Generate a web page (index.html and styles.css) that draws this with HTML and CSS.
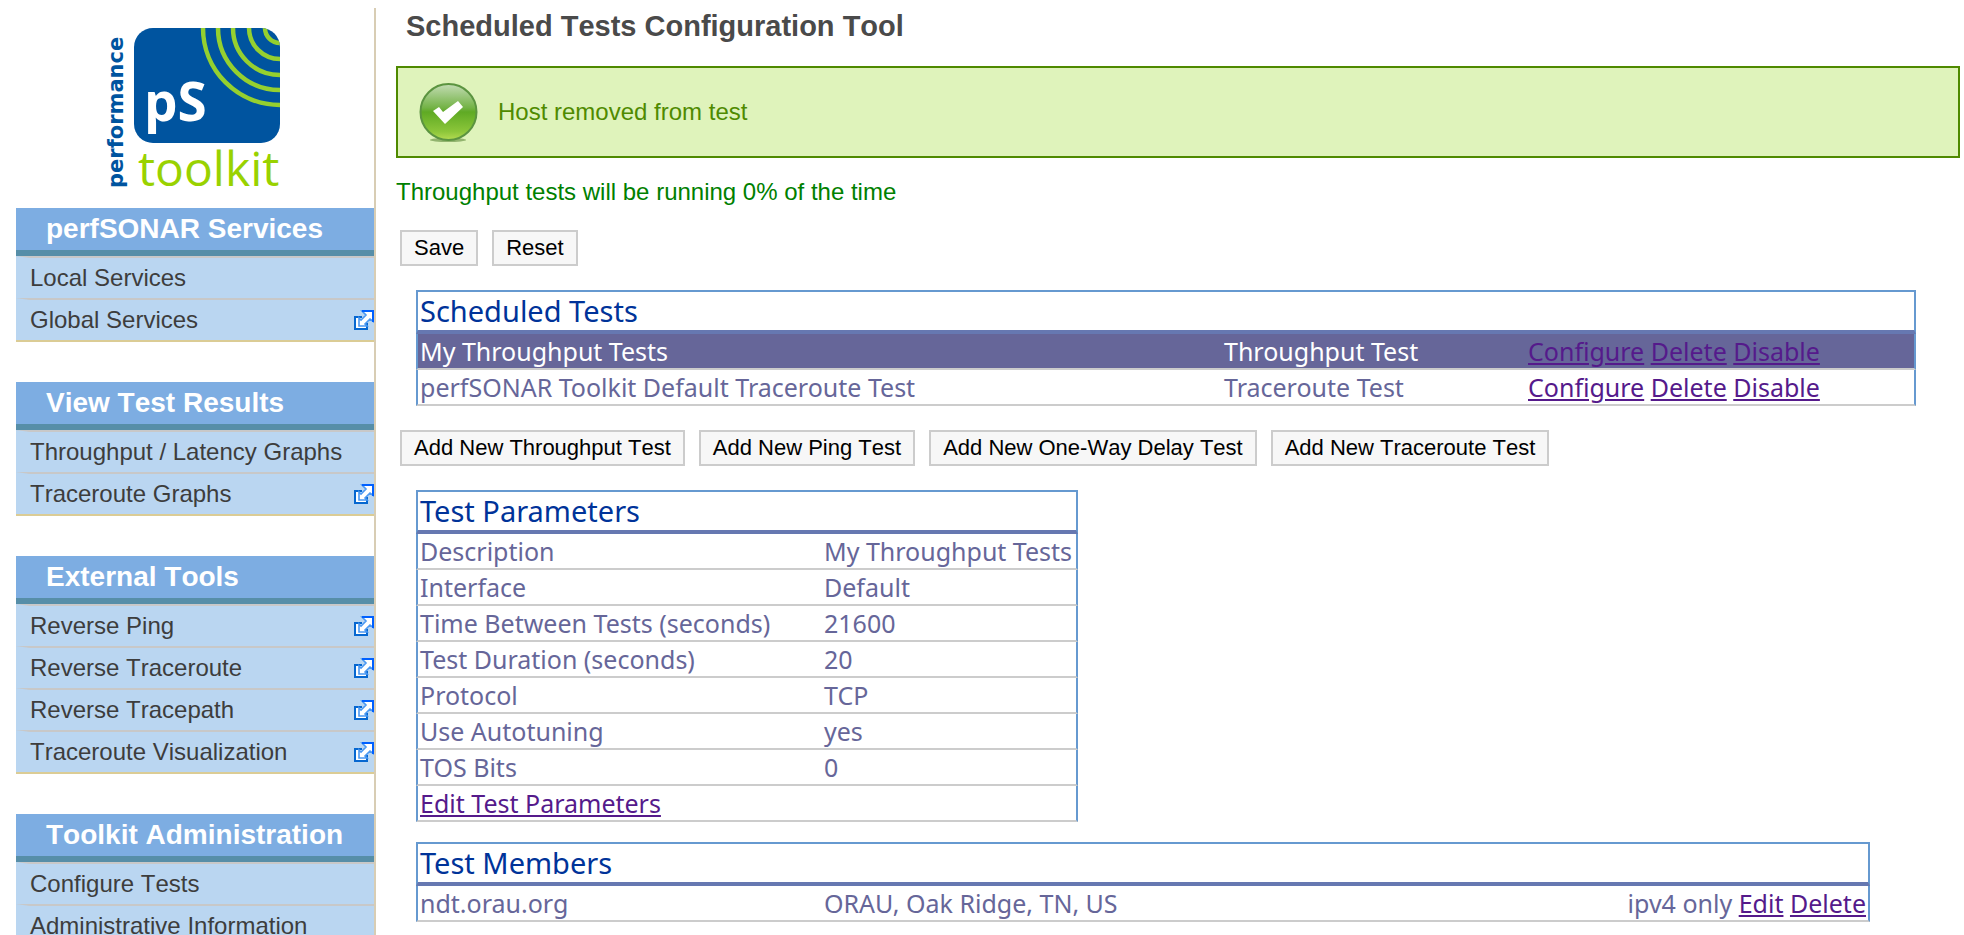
FILE: index.html
```html
<!DOCTYPE html>
<html lang="en">
<head>
<meta charset="utf-8">
<title>Scheduled Tests Configuration Tool</title>
<link rel="stylesheet" href="styles.css">
</head>
<body>
<svg class="defs" aria-hidden="true">
  <symbol id="external" viewBox="0 0 20 20">
    <path d="M8 7H1v12h12v-6" fill="#fff" stroke="#0667d0" stroke-width="2"/>
    <path d="M8 1H20V12L16 9L11 14L13 16H5V8L7 10L12 5Z" fill="#fff" stroke="#4a98f2" stroke-width="1.6"/>
    <path d="M8 1h11v11" fill="none" stroke="#0060ff" stroke-width="2"/>
  </symbol>
</svg>
<div class="page">
  <aside class="sidebar">
    <svg class="logo" viewBox="0 0 174 160" role="img" aria-label="pS performance toolkit">
      <defs><clipPath id="badge"><rect x="28" y="0" width="146" height="115" rx="19"/></clipPath></defs>
      <rect x="28" y="0" width="146" height="115" rx="19" fill="#00549f"/>
      <g clip-path="url(#badge)" fill="none" stroke="#95d02f" stroke-width="4.5">
        <circle cx="174" cy="0" r="15"/><circle cx="174" cy="0" r="31"/><circle cx="174" cy="0" r="47"/><circle cx="174" cy="0" r="62"/><circle cx="174" cy="0" r="77"/>
      </g>
      <text class="logo-ps" x="38" y="93">pS</text>
      <text class="logo-perf" transform="translate(17 160) rotate(-90)">performance</text>
      <text class="logo-kit" x="32" y="158">toolkit</text>
    </svg>
    <nav class="menu">
      <section class="group">
        <h2>perfSONAR Services</h2>
        <ul>
          <li><a href="#">Local Services</a></li>
          <li><a href="#">Global Services</a><svg class="ext"><use href="#external"/></svg></li>
        </ul>
      </section>
      <section class="group">
        <h2>View Test Results</h2>
        <ul>
          <li><a href="#">Throughput / Latency Graphs</a></li>
          <li><a href="#">Traceroute Graphs</a><svg class="ext"><use href="#external"/></svg></li>
        </ul>
      </section>
      <section class="group">
        <h2>External Tools</h2>
        <ul>
          <li><a href="#">Reverse Ping</a><svg class="ext"><use href="#external"/></svg></li>
          <li><a href="#">Reverse Traceroute</a><svg class="ext"><use href="#external"/></svg></li>
          <li><a href="#">Reverse Tracepath</a><svg class="ext"><use href="#external"/></svg></li>
          <li><a href="#">Traceroute Visualization</a><svg class="ext"><use href="#external"/></svg></li>
        </ul>
      </section>
      <section class="group">
        <h2>Toolkit Administration</h2>
        <ul>
          <li><a href="#">Configure Tests</a></li>
          <li><a href="#">Administrative Information</a></li>
        </ul>
      </section>
    </nav>
  </aside>
  <main class="content">
    <h1>Scheduled Tests Configuration Tool</h1>
    <div class="notice" role="status">
      <svg class="check" viewBox="0 0 60 60" aria-hidden="true">
        <defs><linearGradient id="ball" x1="0" y1="0" x2="0" y2="1">
          <stop offset="0" stop-color="#c3dcb4"/><stop offset=".42" stop-color="#74b347"/><stop offset=".5" stop-color="#5faa24"/><stop offset=".85" stop-color="#8cc63a"/><stop offset="1" stop-color="#b5dc52"/>
        </linearGradient></defs>
        <ellipse cx="30" cy="58" rx="18" ry="2" fill="#5f8a3a" opacity=".6"/>
        <circle cx="30.5" cy="30" r="28" fill="url(#ball)" stroke="#5b9440" stroke-width="2"/>
        <path d="M15 29l6-4 4 5 15-11 5 6-18 17z" fill="#fff"/>
      </svg>
      <span>Host removed from test</span>
    </div>
    <p class="load">Throughput tests will be running 0% of the time</p>
    <div class="buttons">
      <button type="button">Save</button>
      <button type="button">Reset</button>
    </div>
    <table class="grid tests">
      <colgroup><col class="c-name"><col class="c-type"><col></colgroup>
      <thead><tr><th colspan="3">Scheduled Tests</th></tr></thead>
      <tbody>
        <tr class="selected"><td>My Throughput Tests</td><td>Throughput Test</td><td><a href="#">Configure</a> <a href="#">Delete</a> <a href="#">Disable</a></td></tr>
        <tr><td>perfSONAR Toolkit Default Traceroute Test</td><td>Traceroute Test</td><td><a href="#">Configure</a> <a href="#">Delete</a> <a href="#">Disable</a></td></tr>
      </tbody>
    </table>
    <div class="buttons">
      <button type="button">Add New Throughput Test</button>
      <button type="button">Add New Ping Test</button>
      <button type="button">Add New One-Way Delay Test</button>
      <button type="button">Add New Traceroute Test</button>
    </div>
    <table class="grid params">
      <colgroup><col class="c-label"><col></colgroup>
      <thead><tr><th colspan="2">Test Parameters</th></tr></thead>
      <tbody>
        <tr><td>Description</td><td>My Throughput Tests</td></tr>
        <tr><td>Interface</td><td>Default</td></tr>
        <tr><td>Time Between Tests (seconds)</td><td>21600</td></tr>
        <tr><td>Test Duration (seconds)</td><td>20</td></tr>
        <tr><td>Protocol</td><td>TCP</td></tr>
        <tr><td>Use Autotuning</td><td>yes</td></tr>
        <tr><td>TOS Bits</td><td>0</td></tr>
        <tr><td colspan="2"><a href="#">Edit Test Parameters</a></td></tr>
      </tbody>
    </table>
    <table class="grid members">
      <colgroup><col class="c-label"><col><col></colgroup>
      <thead><tr><th colspan="3">Test Members</th></tr></thead>
      <tbody>
        <tr><td>ndt.orau.org</td><td>ORAU, Oak Ridge, TN, US</td><td class="right">ipv4 only <a href="#">Edit</a> <a href="#">Delete</a></td></tr>
      </tbody>
    </table>
  </main>
</div>
</body>
</html>
```
FILE: styles.css
```css
* { box-sizing: border-box; }

body {
  margin: 0;
  height: 100vh;
  overflow: hidden;
  background: #fff;
  font-family: "Liberation Sans", Arial, sans-serif;
  font-size: 24px;
  font-kerning: none;
}

.defs { position: absolute; width: 0; height: 0; }

.page { display: flex; padding-top: 8px; }

.sidebar {
  flex: none;
  width: 376px;
  padding-left: 16px;
  border-right: 2px solid #d8cdb4;
}

.logo {
  display: block;
  width: 174px;
  height: 160px;
  margin: 20px 0 20px 90px;
  overflow: visible;
}

.logo text { font-family: "Open Sans", "Noto Sans", sans-serif; }
.logo .logo-ps { font-size: 53px; font-weight: 700; fill: #fff; }
.logo .logo-perf { font-family: "DejaVu Sans", sans-serif; font-size: 21px; font-weight: 700; fill: #00549f; }
.logo .logo-kit { font-size: 48px; fill: #99d200; }

.menu { display: flex; flex-direction: column; gap: 40px; }

.group h2 {
  margin: 0;
  padding-left: 30px;
  border-bottom: 6px solid #568ea8;
  background: #7dade2;
  color: #fff;
  font-size: 28px;
  line-height: 42px;
  white-space: nowrap;
}

.group ul {
  margin: 0;
  padding: 0;
  border-bottom: 2px solid #dbcc95;
  list-style: none;
}

.group li {
  display: flex;
  align-items: center;
  justify-content: space-between;
  border-top: 2px solid #c8c8c8;
  border-left: 14px solid #bad6f1;
  background: #bad6f1;
  line-height: 40px;
}

.group a { color: #3d3d3d; text-decoration: none; white-space: nowrap; }
.ext { width: 20px; height: 20px; }

.content { flex: 1; min-width: 0; padding: 0 4px 0 20px; }

h1 {
  margin: 0;
  padding-left: 10px;
  color: #4a4a4a;
  font-size: 29px;
  line-height: 36px;
}

.notice {
  display: flex;
  align-items: center;
  gap: 20px;
  height: 92px;
  margin-top: 22px;
  padding-left: 20px;
  border: 2px solid #4f8a00;
  background: #dff3bb;
  color: #4f8a00;
}

.check { width: 60px; height: 60px; }

.load { margin: 18px 0 22px; color: #008000; line-height: 32px; }

.buttons { display: flex; flex-wrap: wrap; gap: 14px; padding-left: 4px; }

button {
  height: 36px;
  padding: 0 12px;
  border: 2px solid #ccc;
  background: #f7f7f7;
  color: #000;
  font: 22px "Liberation Sans", Arial, sans-serif;
  font-kerning: none;
}

.grid {
  margin: 24px 0 24px 20px;
  border-collapse: separate;
  border-spacing: 0;
  table-layout: fixed;
  color: #669;
  font-family: "Noto Sans", "Open Sans", sans-serif;
  font-size: 25px;
  font-kerning: normal;
  line-height: 34px;
}

.grid th {
  height: 44px;
  padding: 0 2px;
  border: 2px solid #6699d0;
  border-bottom: 4px solid #6678b1;
  color: #039;
  font-size: 29px;
  font-weight: 400;
  line-height: 38px;
  text-align: left;
}

.grid td {
  padding: 0 2px;
  border-bottom: 2px solid #ccc;
  white-space: nowrap;
}

.grid td:first-child { border-left: 2px solid #6699d0; }
.grid td:last-child { border-right: 2px solid #6699d0; }
.grid a { color: #551a8b; }
.grid .right { text-align: right; }

.selected td { background: #669; color: #fff; }

.tests { width: calc(100% - 64px); }
.params { width: 662px; margin-bottom: 20px; }
.members { width: calc(100% - 110px); margin-top: 0; }
.c-name { width: 806px; }
.c-type { width: 304px; }
.c-label { width: 406px; }
```
